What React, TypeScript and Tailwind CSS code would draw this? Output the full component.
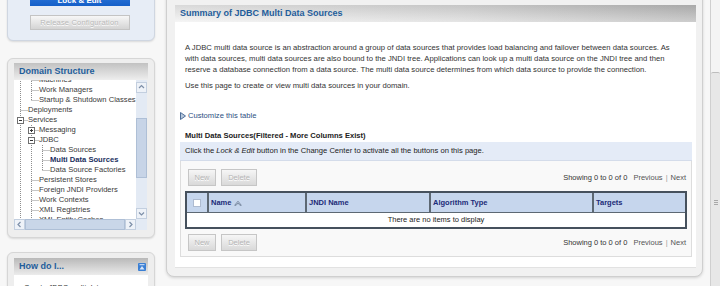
import React from "react";

type TreeRow = {
  label: string;
  guides: boolean[];
  kind: "tee" | "end";
  box?: "plus" | "minus";
  active?: boolean;
};

const tree: TreeRow[] = [
  { label: "Machines", guides: [true], kind: "tee" },
  { label: "Work Managers", guides: [true], kind: "tee" },
  { label: "Startup & Shutdown Classes", guides: [true], kind: "end" },
  { label: "Deployments", guides: [], kind: "tee" },
  { label: "Services", guides: [], kind: "tee", box: "minus" },
  { label: "Messaging", guides: [true], kind: "tee", box: "plus" },
  { label: "JDBC", guides: [true], kind: "tee", box: "minus" },
  { label: "Data Sources", guides: [true, true], kind: "tee" },
  { label: "Multi Data Sources", guides: [true, true], kind: "tee", active: true },
  { label: "Data Source Factories", guides: [true, true], kind: "end" },
  { label: "Persistent Stores", guides: [true], kind: "tee" },
  { label: "Foreign JNDI Providers", guides: [true], kind: "tee" },
  { label: "Work Contexts", guides: [true], kind: "tee" },
  { label: "XML Registries", guides: [true], kind: "tee" },
  { label: "XML Entity Caches", guides: [true], kind: "tee" },
  { label: "jCOM", guides: [true], kind: "tee" },
];

const columns = [
  { name: "Name", width: "w-[98px]", sort: true },
  { name: "JNDI Name", width: "w-[124px]" },
  { name: "Algorithm Type", width: "w-[163px]" },
  { name: "Targets", width: "flex-1" },
];

const line = "#8e8e8e";

function Connector({ kind, box }: { kind: "pass" | "tee" | "end" | "none"; box?: "plus" | "minus" }) {
  return (
    <svg width="11" height="10" className="shrink-0 overflow-visible">
      {(kind === "pass" || kind === "tee") && (
        <line x1="6.5" y1="0" x2="6.5" y2="10" stroke={line} strokeDasharray="1 1" />
      )}
      {kind === "end" && <line x1="6.5" y1="0" x2="6.5" y2="5.5" stroke={line} strokeDasharray="1 1" />}
      {(kind === "tee" || kind === "end") && (
        <line x1="6.5" y1="5.5" x2="14" y2="5.5" stroke={line} strokeDasharray="1 1" />
      )}
      {box && (
        <g>
          <rect x="3.5" y="2.5" width="6" height="6" fill="#fff" stroke="#6f6f6f" />
          <line x1="5" y1="5.5" x2="8" y2="5.5" stroke="#333" />
          {box === "plus" && <line x1="6.5" y1="4" x2="6.5" y2="7" stroke="#333" />}
        </g>
      )}
    </svg>
  );
}

function Arrow({ dir }: { dir: "up" | "down" | "left" | "right" }) {
  const pts = {
    up: "3,6 5.5,3.5 8,6",
    down: "3,4.5 5.5,7 8,4.5",
    left: "6.5,3 4,5.5 6.5,8",
    right: "4.5,3 7,5.5 4.5,8",
  }[dir];
  return (
    <div className="flex h-[11px] w-[11px] shrink-0 items-center justify-center border border-[#c3cfdf] bg-[#eef2f8]">
      <svg width="11" height="11" className="shrink-0">
        <polyline points={pts} fill="none" stroke="#7d8fa8" strokeWidth="1.2" />
      </svg>
    </div>
  );
}

function DisabledButton({ label, width }: { label: string; width: string }) {
  return (
    <div
      className={`flex h-[17px] ${width} items-center justify-center border border-[#c6c6c6] bg-gradient-to-b from-[#f6f6f6] to-[#d9d9d9] text-[7.5px] text-[#b4b4b4] [text-shadow:0_1px_0_#fff]`}
    >
      {label}
    </div>
  );
}

function ButtonRow() {
  return (
    <div className="flex h-[17px] items-center justify-between pl-[3px] pr-[1px]">
      <div className="flex gap-[5px]">
        <DisabledButton label="New" width="w-[28px]" />
        <DisabledButton label="Delete" width="w-[36px]" />
      </div>
      <div className="text-[7.5px] text-[#333]">
        Showing 0 to 0 of 0 <span className="ml-[4px] text-[#555]">Previous</span>
        <span className="mx-[3px] text-[#999]">|</span>
        <span className="text-[#555]">Next</span>
      </div>
    </div>
  );
}

export default function App() {
  return (
    <div className="flex h-[286px] w-[720px] overflow-hidden bg-[#f7f7f7] font-['Liberation_Sans',Arial,sans-serif] text-[#333]">
      {/* LEFT COLUMN */}
      <div className="flex w-[166px] shrink-0 flex-col pl-[7px]">
        {/* change center */}
        <div className="-mt-[30px] flex w-[148px] flex-col items-center gap-[9px] rounded-b-[6px] border border-[#cfd6e1] bg-[#e7edf6] pb-[10px] pt-[16px] shadow-[0_1px_2px_rgba(0,0,0,0.12)]">
          <div className="ml-[-3px] flex h-[19px] w-[100px] items-start justify-center bg-gradient-to-b from-[#3b86e6] to-[#145fc8] pt-[9px] text-[8px] font-bold leading-[10px] text-white">
            Lock &amp; Edit
          </div>
          <div className="ml-[-3px] flex h-[15px] w-[100px] items-center justify-center border border-[#c4c4c4] bg-gradient-to-b from-[#f7f7f7] to-[#d4d4d4] text-[7.5px] tracking-[0.2px] text-[#b9b9b9] [text-shadow:0_1px_0_#fff]">
            Release Configuration
          </div>
        </div>

        {/* domain structure */}
        <div className="mt-[17px] flex w-[148px] flex-col rounded-[6px] border border-[#d6d6d6] bg-[#eeeeee] px-[6px] pb-[7px] pt-[4px] shadow-[0_1px_2px_rgba(0,0,0,0.12)]">
          <div className="flex h-[17px] items-center bg-gradient-to-b from-[#c2c2c2] to-[#eeeeee] pl-[5px] text-[9px] font-bold text-[#1f5d9b]">
            Domain Structure
          </div>
          <div className="flex h-[139px]">
            <div className="w-[122px] overflow-hidden bg-white">
              <div className="-mt-[5px]">
                {tree.map((r) => (
                  <div key={r.label} className="flex h-[10px] items-center whitespace-nowrap">
                    {r.guides.map((g, i) => (
                      <Connector key={i} kind={g ? "pass" : "none"} />
                    ))}
                    <Connector kind={r.kind} box={r.box} />
                    <span
                      className={`pl-[3px] text-[7.6px] leading-[10px] ${
                        r.active ? "font-bold text-[#1b2f5e]" : "text-[#3a3a3a]"
                      }`}
                    >
                      {r.label}
                    </span>
                  </div>
                ))}
              </div>
            </div>
            <div className="flex w-[11px] flex-col bg-[#e3eaf4]">
              <div className="mt-[2px]">
                <Arrow dir="up" />
              </div>
              <div className="flex-1 pt-[25px]">
                <div className="h-[60px] border border-[#aebfd6] bg-[#c7d4e7]" />
              </div>
              <Arrow dir="down" />
            </div>
          </div>
          <div className="flex h-[11px]">
            <div className="flex w-[122px] bg-[#e3eaf4]">
              <Arrow dir="left" />
              <div className="flex-1 border border-[#aebfd6] bg-[#c9d6e8]" />
              <Arrow dir="right" />
            </div>
            <div className="w-[11px] bg-[#e3eaf4]" />
          </div>
        </div>

        {/* how do i */}
        <div className="mt-[14px] flex w-[148px] flex-col rounded-t-[6px] border border-[#d6d6d6] bg-[#eeeeee] px-[6px] pt-[5px] shadow-[0_1px_2px_rgba(0,0,0,0.12)]">
          <div className="flex h-[17px] items-center justify-between bg-gradient-to-b from-[#b9b9b9] to-[#ececec] pl-[5px] pr-[2px] text-[9px] font-bold text-[#1f5d9b]">
            How do I...
            <svg width="8" height="8" className="shrink-0">
              <rect x="0" y="0" width="8" height="8" rx="1" fill="#3a7fd4" />
              <polygon points="1.5,6.5 4,3 6.5,6.5" fill="#dbe8fa" />
              <rect x="1.5" y="1.2" width="5" height="1" fill="#dbe8fa" />
            </svg>
          </div>
          <div className="flex h-[20px] items-center gap-[3px] bg-white pl-[2px] pt-[6px] text-[7.5px]">
            <svg width="5" height="5">
              <circle cx="2.5" cy="2.5" r="2" fill="none" stroke="#777" />
            </svg>
            Create JDBC multi data sources
          </div>
        </div>
      </div>

      {/* MAIN PANEL */}
      <div className="-mt-[6px] flex h-[283px] w-[537px] shrink-0 flex-col rounded-b-[8px] border border-[#cfcfcf] bg-[#f1f1f1] pb-[8px] pl-[8px] pr-[6px] pt-[10px] shadow-[0_1px_3px_rgba(0,0,0,0.15)]">
        <div className="flex h-[17px] shrink-0 items-center bg-[linear-gradient(to_bottom,rgba(0,0,0,0.1),rgba(255,255,255,0.25)),linear-gradient(to_right,#f2f2f2,#dcdcdc_55%,#bcbcbc)] pl-[5px] text-[9px] font-bold text-[#1f5d9b]">
          Summary of JDBC Multi Data Sources
        </div>
        <div className="flex flex-1 flex-col border-b border-[#e2e2e2] bg-white pl-[5px] pr-[4px] pt-[20px]">
          <p className="whitespace-nowrap pl-[5px] text-[7.7px] leading-[11px]">
            A JDBC multi data source is an abstraction around a group of data sources that provides load balancing and
            failover between data sources. As
            <br />
            with data sources, multi data sources are also bound to the JNDI tree. Applications can look up a multi data
            source on the JNDI tree and then
            <br />
            reserve a database connection from a data source. The multi data source determines from which data source to
            provide the connection.
          </p>
          <p className="mt-[5px] pl-[5px] text-[7.7px] leading-[11px]">
            Use this page to create or view multi data sources in your domain.
          </p>

          <div className="mt-[19px] flex h-[11px] items-center gap-[2px] text-[7.6px] text-[#2c4f7f]">
            <svg width="6" height="8" className="shrink-0">
              <polygon points="0.5,0.5 5.5,4 0.5,7.5" fill="#b8c8dc" stroke="#4f6f99" />
            </svg>
            Customize this table
          </div>

          <div className="mt-[9px] h-[11px] pl-[5px] text-[7.6px] font-bold leading-[11px] text-[#222]">
            Multi Data Sources(Filtered - More Columns Exist)
          </div>

          <div className="mt-[1px] flex h-[19px] items-center border-b border-[#d4dcea] bg-[#e4ebf7] pl-[5px] text-[7.6px] text-[#222]">
            Click the&nbsp;<i>Lock &amp; Edit</i>&nbsp;button in the Change Center to activate all the buttons on this page.
          </div>

          <div className="flex h-[96px] flex-col border-x border-b border-[#dddddd] bg-[#f9f9f9] px-[4px] pb-[5px] pt-[8px]">
            <ButtonRow />

            <div className="mt-[5px] flex flex-col border-2 border-[#46515d]">
              <div className="flex h-[20px] border-b border-[#5d6873] bg-[#c6d6ed]">
                <div className="flex w-[20px] items-center justify-center">
                  <div className="h-[8px] w-[8px] border border-[#aebbd0] bg-white" />
                </div>
                {columns.map((c) => (
                  <div
                    key={c.name}
                    className={`flex ${c.width} items-center gap-[3px] border-l-2 border-[#5d6873] pl-[2px] text-[7.5px] font-bold text-[#1c2b78]`}
                  >
                    {c.name}
                    {c.sort && (
                      <svg width="8" height="6" className="shrink-0">
                        <path d="M0.7 5.3 L4 1.2 L7.3 5.3 L5.9 5.3 L4 3 L2.1 5.3 Z" fill="none" stroke="#6b7b92" strokeWidth="0.8" />
                      </svg>
                    )}
                  </div>
                ))}
              </div>
              <div className="flex h-[14px] items-center justify-center bg-white text-[7.5px] text-[#222]">
                There are no items to display
              </div>
            </div>

            <div className="mt-[5px]">
              <ButtonRow />
            </div>
          </div>
        </div>
      </div>

      {/* BROWSER SCROLLBAR */}
      <div className="ml-[7px] flex w-[10px] shrink-0 flex-col border-l border-[#cfcfcf] bg-[#f4f4f4]">
        <div className="mt-[72px] flex h-[270px] flex-col items-center rounded-t-[2px] border-t border-[#bdbdbd] bg-[#e7e7e7] pt-[126px]">
          <svg width="6" height="6">
            <line x1="1" y1="1.5" x2="5" y2="1.5" stroke="#a9a9a9" />
            <line x1="1" y1="3.5" x2="5" y2="3.5" stroke="#a9a9a9" />
            <line x1="1" y1="5.5" x2="5" y2="5.5" stroke="#a9a9a9" />
          </svg>
        </div>
      </div>
    </div>
  );
}
